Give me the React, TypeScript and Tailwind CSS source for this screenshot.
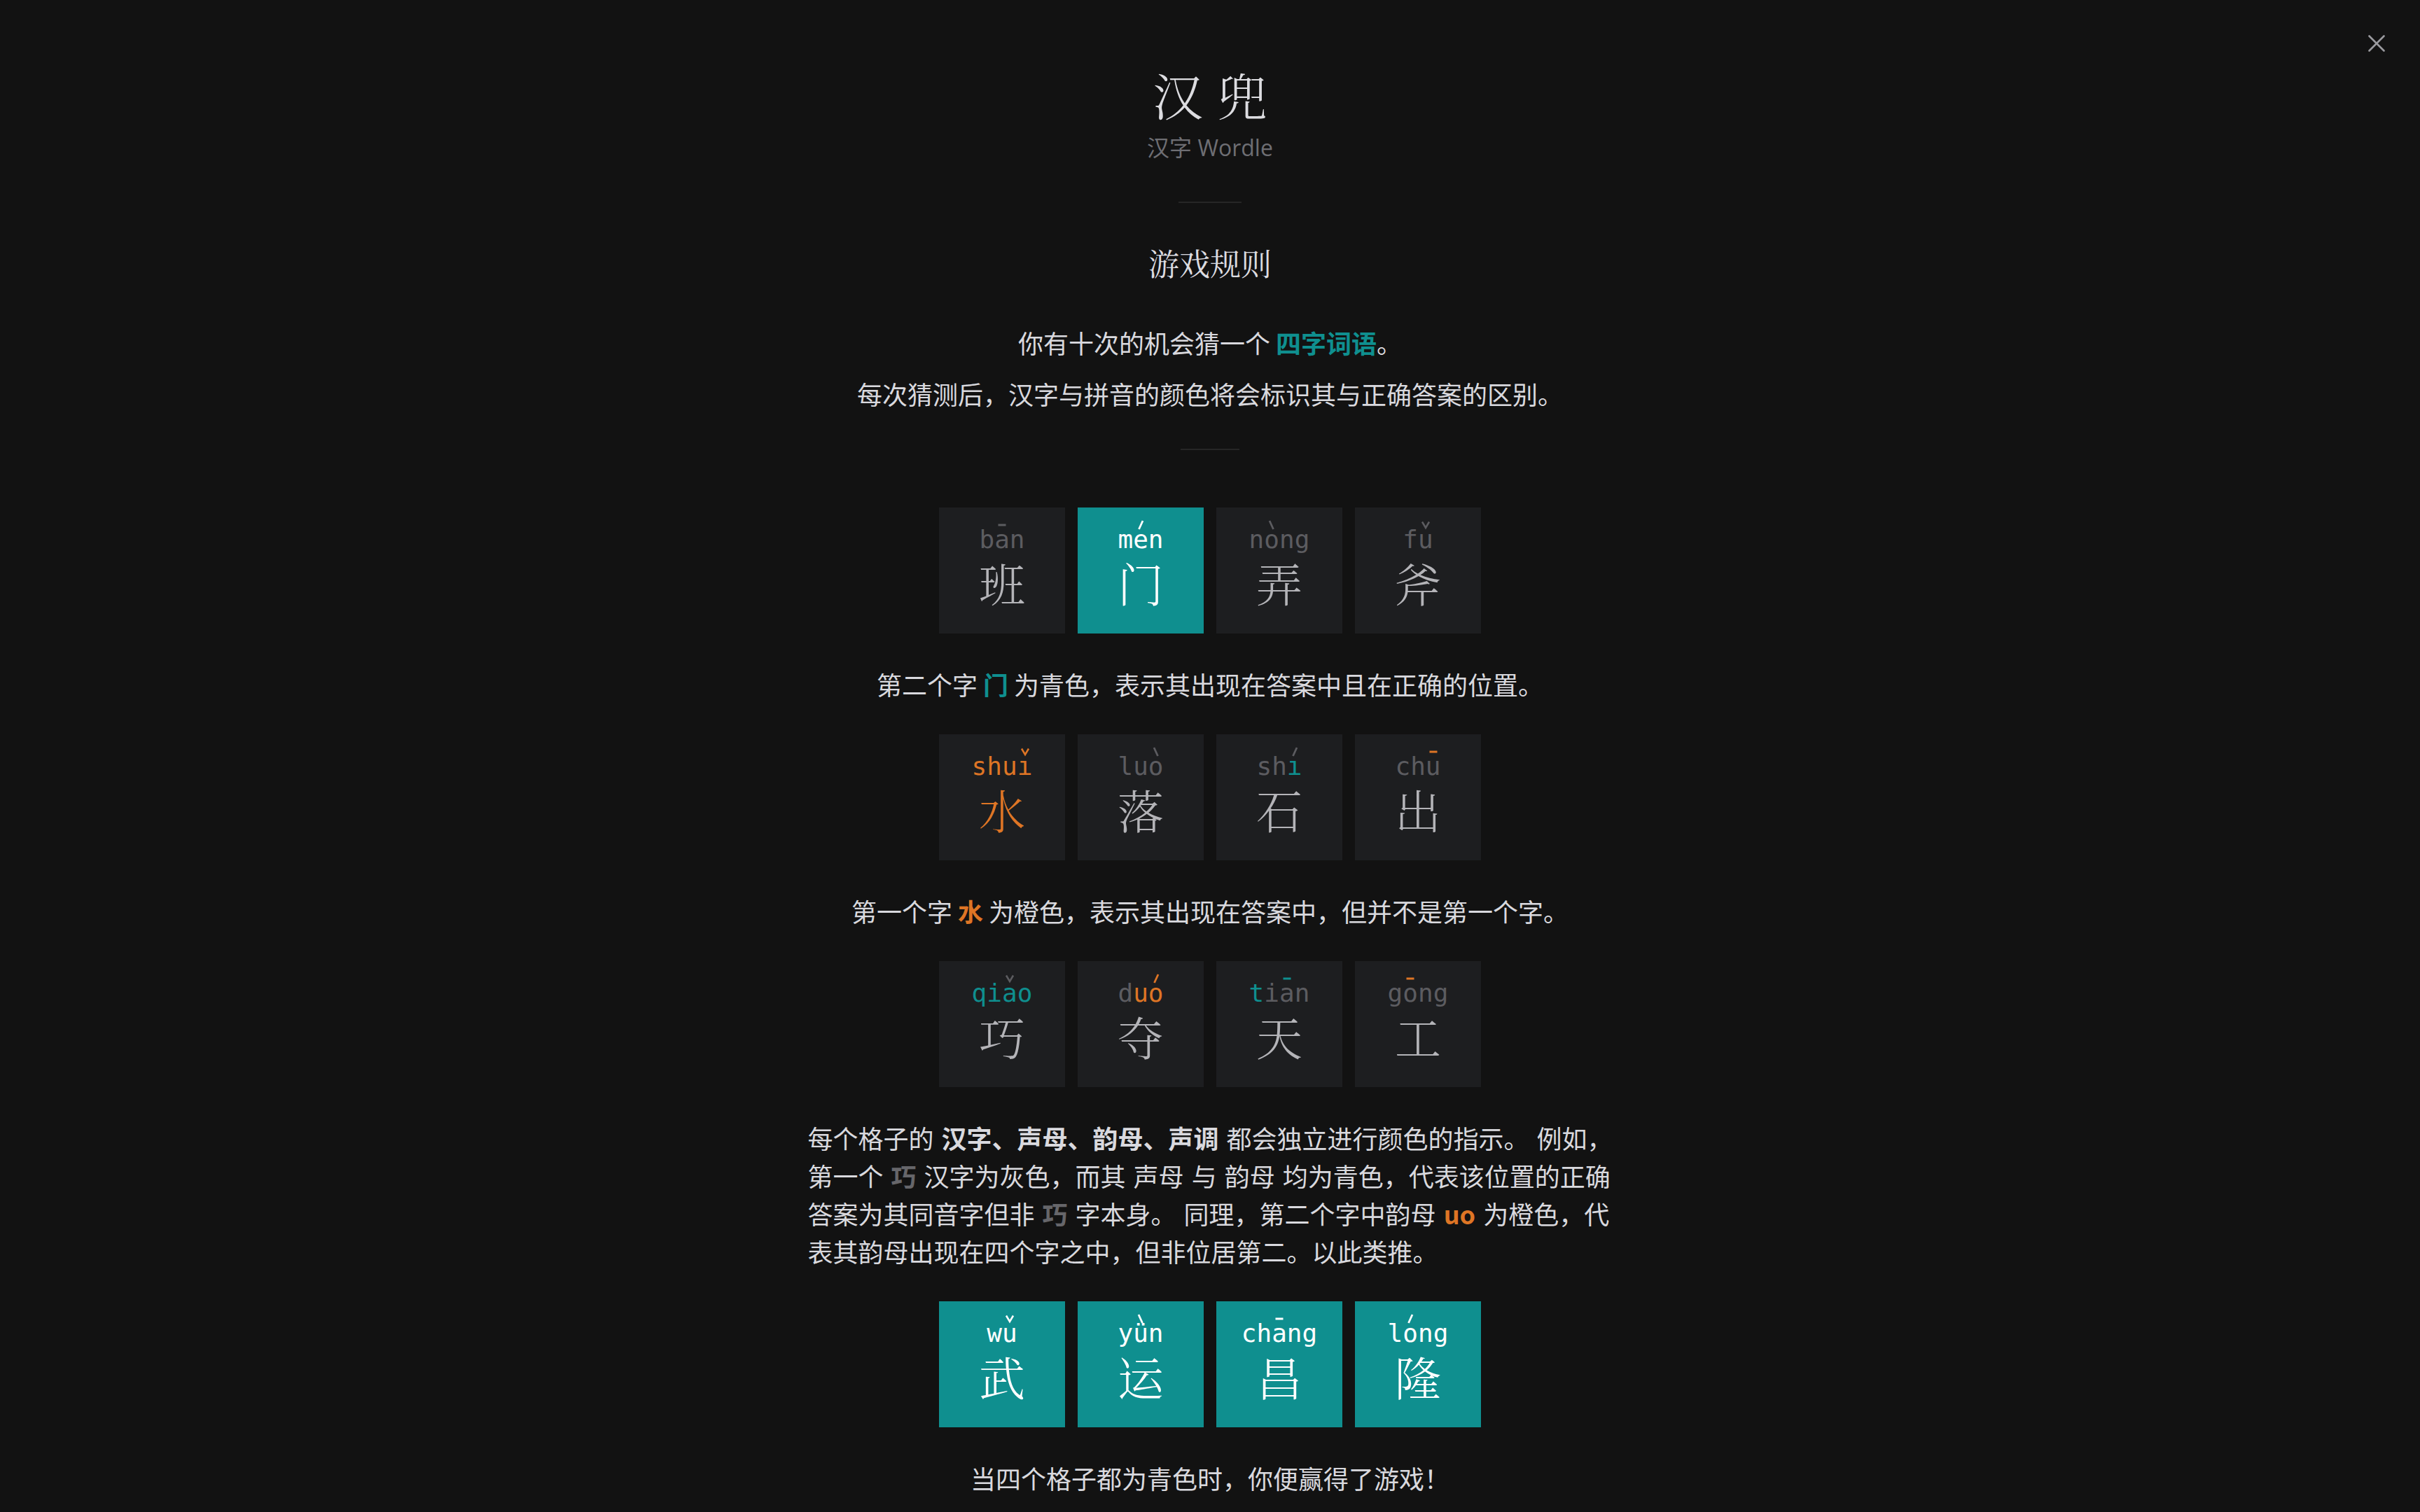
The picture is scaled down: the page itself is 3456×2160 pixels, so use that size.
import React from 'react'

const OK = '#0f8f8f'
const MIS = '#de7525'
const PY_GRAY = '#5c5c60'
const CH_GRAY = '#b4b4b8'
const WHITE = '#ffffff'

type Letter = { t: string; c: string; tone?: 1 | 2 | 3 | 4; tc?: string }

type TileData = {
    char: string
    charColor: string
    filled?: boolean
    py: Letter[]
}

const L = (t: string, c: string, tone?: 1 | 2 | 3 | 4, tc?: string): Letter => ({ t, c, tone, tc })

const ToneMark: React.FC<{ tone: 1 | 2 | 3 | 4; color: string }> = ({ tone, color }) => (
    <svg
        width="16"
        height="16"
        viewBox="0 0 16 16"
        className="absolute left-1/2 top-[-11px] -translate-x-1/2"
        fill="none"
        stroke={color}
        strokeLinecap="butt"
    >
        {tone === 1 && <line x1="2.5" y1="8" x2="13.5" y2="8" strokeWidth="3" />}
        {tone === 2 && <line x1="5.5" y1="14" x2="11" y2="2" strokeWidth="2.8" />}
        {tone === 3 && <polyline points="3,3.5 8,12 13,3.5" strokeWidth="2.5" />}
        {tone === 4 && <line x1="5" y1="2" x2="10.5" y2="14" strokeWidth="2.8" />}
    </svg>
)

const Tile: React.FC<{ tile: TileData }> = ({ tile }) => (
    <div
        className={
            'flex h-[180px] w-[180px] flex-col items-center pt-[28px] ' + (tile.filled ? 'bg-[#0f8f8f]' : 'bg-[#1d1e20]')
        }
    >
        <div className="flex h-[36px] font-['DejaVu_Sans_Mono',monospace] text-[36px] leading-[36px]">
            {tile.py.map((l, i) => (
                <span key={i} className="relative inline-block" style={{ color: l.c }}>
                    {l.t}
                    {l.tone && <ToneMark tone={l.tone} color={l.tc ?? l.c} />}
                </span>
            ))}
        </div>
        <div
            className="mt-[10px] font-['Noto_Serif_CJK_SC','Noto_Sans_CJK_SC',serif] text-[66px] font-light leading-none"
            style={{ color: tile.charColor }}
        >
            {tile.char}
        </div>
    </div>
)

const TileRow: React.FC<{ tiles: TileData[] }> = ({ tiles }) => (
    <div className="flex justify-center gap-[18px]">
        {tiles.map((t, i) => (
            <Tile key={i} tile={t} />
        ))}
    </div>
)

const g = PY_GRAY

const row1: TileData[] = [
    { char: '班', charColor: CH_GRAY, py: [L('b', g), L('a', g, 1), L('n', g)] },
    { char: '门', charColor: WHITE, filled: true, py: [L('m', WHITE), L('e', WHITE, 2), L('n', WHITE)] },
    { char: '弄', charColor: CH_GRAY, py: [L('n', g), L('o', g, 4), L('n', g), L('g', g)] },
    { char: '斧', charColor: CH_GRAY, py: [L('f', g), L('u', g, 3)] },
]

const row2: TileData[] = [
    { char: '水', charColor: MIS, py: [L('s', MIS), L('h', MIS), L('u', MIS), L('ı', MIS, 3)] },
    { char: '落', charColor: CH_GRAY, py: [L('l', g), L('u', g), L('o', g, 4)] },
    { char: '石', charColor: CH_GRAY, py: [L('s', g), L('h', g), L('ı', OK, 2, g)] },
    { char: '出', charColor: CH_GRAY, py: [L('c', g), L('h', g), L('u', g, 1, MIS)] },
]

const row3: TileData[] = [
    { char: '巧', charColor: CH_GRAY, py: [L('q', OK), L('i', OK), L('a', OK, 3, g), L('o', OK)] },
    { char: '夺', charColor: CH_GRAY, py: [L('d', g), L('u', MIS), L('o', MIS, 2, MIS)] },
    { char: '天', charColor: CH_GRAY, py: [L('t', OK), L('i', g), L('a', g, 1, OK), L('n', g)] },
    { char: '工', charColor: CH_GRAY, py: [L('g', g), L('o', g, 1, MIS), L('n', g), L('g', g)] },
]

const row4: TileData[] = [
    { char: '武', charColor: WHITE, filled: true, py: [L('w', WHITE), L('u', WHITE, 3)] },
    { char: '运', charColor: WHITE, filled: true, py: [L('y', WHITE), L('ü', WHITE, 4), L('n', WHITE)] },
    { char: '昌', charColor: WHITE, filled: true, py: [L('c', WHITE), L('h', WHITE), L('a', WHITE, 1), L('n', WHITE), L('g', WHITE)] },
    { char: '隆', charColor: WHITE, filled: true, py: [L('l', WHITE), L('o', WHITE, 2), L('n', WHITE), L('g', WHITE)] },
]

const App: React.FC = () => {
    return (
        <div className="relative min-h-screen w-full bg-[#121212] font-['Noto_Sans_CJK_SC',sans-serif] text-[#d9d9de]">
            <button className="absolute right-[50px] top-[50px] h-[24px] w-[24px] text-[#9a9a9f]">
                <svg width="24" height="24" viewBox="0 0 24 24" fill="none" stroke="currentColor" strokeWidth="2.6" strokeLinecap="round">
                    <line x1="1.5" y1="1.5" x2="22.5" y2="22.5" />
                    <line x1="22.5" y1="1.5" x2="1.5" y2="22.5" />
                </svg>
            </button>

            <div className="flex flex-col items-center pt-[98px]">
                <h1 className="pl-[20px] font-['Noto_Serif_CJK_SC','Noto_Sans_CJK_SC',serif] text-[72px] font-light leading-none tracking-[20px] text-[#dcdce0]">
                    汉兜
                </h1>
                <p className="mt-[20px] font-['Open_Sans','Noto_Sans_CJK_SC',sans-serif] text-[32px] leading-[42px] text-[#6e6e73]">
                    汉字 Wordle
                </p>
                <div className="mt-[56px] h-[2px] w-[90px] bg-[#262626]" />

                <h2 className="mt-[63px] font-['Noto_Serif_CJK_SC','Noto_Sans_CJK_SC',serif] text-[44px] leading-none text-[#dcdce0]">
                    游戏规则
                </h2>

                <p className="mt-[65px] text-[36px] leading-[54px]">
                    你有十次的机会猜一个 <b className="font-bold text-[#0f8f8f]">四字词语</b>。
                </p>
                <p className="mt-[19px] text-[36px] leading-[54px]">每次猜测后，汉字与拼音的颜色将会标识其与正确答案的区别。</p>

                <div className="mt-[52px] h-[2px] w-[84px] bg-[#262626]" />

                <div className="mt-[82px] flex flex-col items-center gap-[45px] text-[36px] leading-[54px]">
                    <TileRow tiles={row1} />
                    <p>
                        第二个字 <b className="font-bold text-[#0f8f8f]">门</b> 为青色，表示其出现在答案中且在正确的位置。
                    </p>
                    <TileRow tiles={row2} />
                    <p>
                        第一个字 <b className="font-bold text-[#de7525]">水</b> 为橙色，表示其出现在答案中，但并不是第一个字。
                    </p>
                    <TileRow tiles={row3} />
                    <p className="text-left [word-spacing:3px]">
                        每个格子的 <b className="font-bold">汉字、声母、韵母、声调</b> 都会独立进行颜色的指示。 例如，
                        <br />
                        第一个 <b className="font-bold text-[#66666a]">巧</b> 汉字为灰色，而其 声母 与 韵母 均为青色，代表该位置的正确
                        <br />
                        答案为其同音字但非 <b className="font-bold text-[#66666a]">巧</b> 字本身。 同理，第二个字中韵母{' '}
                        <b className="font-bold text-[#de7525]">uo</b> 为橙色，代
                        <br />
                        表其韵母出现在四个字之中，但非位居第二。以此类推。
                    </p>
                    <TileRow tiles={row4} />
                    <p>当四个格子都为青色时，你便赢得了游戏！</p>
                </div>
            </div>
        </div>
    )
}

export default App
